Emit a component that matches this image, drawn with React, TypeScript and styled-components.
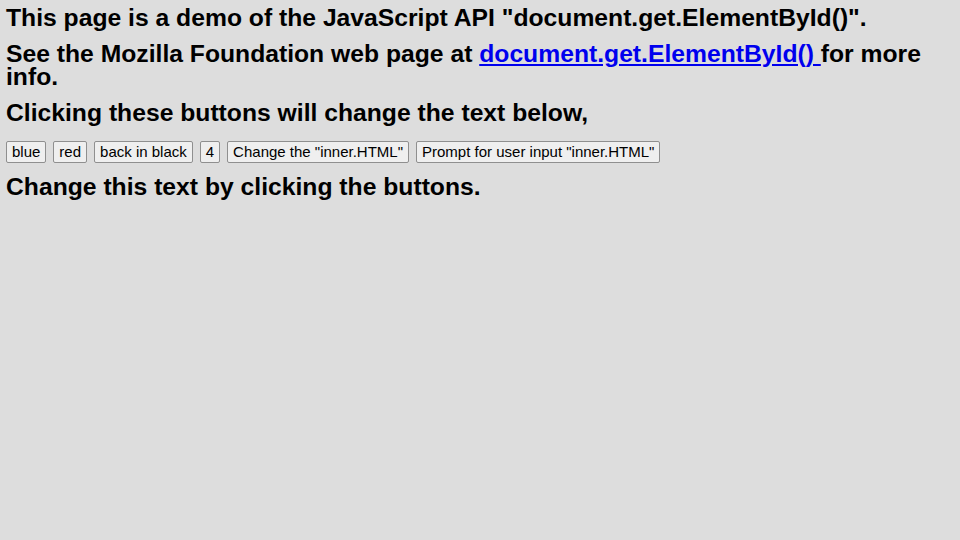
import React from "react";
import styled, { createGlobalStyle } from "styled-components";

const Global = createGlobalStyle`
  html, body {
    margin: 0;
    padding: 0;
    background: #dddddd;
  }
  body {
    font-family: "Liberation Sans", Arial, sans-serif;
    color: #000;
  }
`;

const Page = styled.main`
  display: flex;
  flex-direction: column;
  align-items: flex-start;
  padding: 6px 6px 0 6px;
  min-height: 540px;
  box-sizing: border-box;
`;

const Heading = styled.h2<{ $gapAfter?: number }>`
  margin: 0 0 ${(p) => (p.$gapAfter ?? 13)}px 0;
  font-size: 24.7px;
  line-height: 23px;
  font-weight: bold;
  width: 100%;
`;

const Link = styled.a`
  color: #0000ee;
  text-decoration: underline;
`;

const ButtonRow = styled.div`
  display: flex;
  gap: 7px;
  margin: 17px 0 12px 0;
`;

const Button = styled.button`
  font-family: "Liberation Sans", Arial, sans-serif;
  font-size: 15px;
  line-height: 18px;
  height: 22px;
  padding: 1px 5px;
  background: #efefef;
  color: #000;
  border: 1px solid #8f8f8f;
  border-radius: 2px;
  box-sizing: border-box;
  cursor: pointer;
`;

export default function App() {
  const [text, setText] = React.useState("Change this text by clicking the buttons.");
  const [color, setColor] = React.useState("#000");
  return (
    <>
      <Global />
      <Page>
        <Heading>This page is a demo of the JavaScript API "document.get.ElementById()".</Heading>
        <Heading>
          See the Mozilla Foundation web page at{" "}
          <Link href="#">document.get.ElementById() </Link>
          for more info.
        </Heading>
        <Heading $gapAfter={0}>Clicking these buttons will change the text below,</Heading>
        <ButtonRow>
          <Button onClick={() => setColor("blue")}>blue</Button>
          <Button onClick={() => setColor("red")}>red</Button>
          <Button onClick={() => setColor("#000")}>back in black</Button>
          <Button onClick={() => setText("4")}>4</Button>
          <Button onClick={() => setText("inner.HTML changed")}>Change the "inner.HTML"</Button>
          <Button onClick={() => setText("Prompted text")}>Prompt for user input "inner.HTML"</Button>
        </ButtonRow>
        <Heading style={{ color }}>{text}</Heading>
      </Page>
    </>
  );
}
